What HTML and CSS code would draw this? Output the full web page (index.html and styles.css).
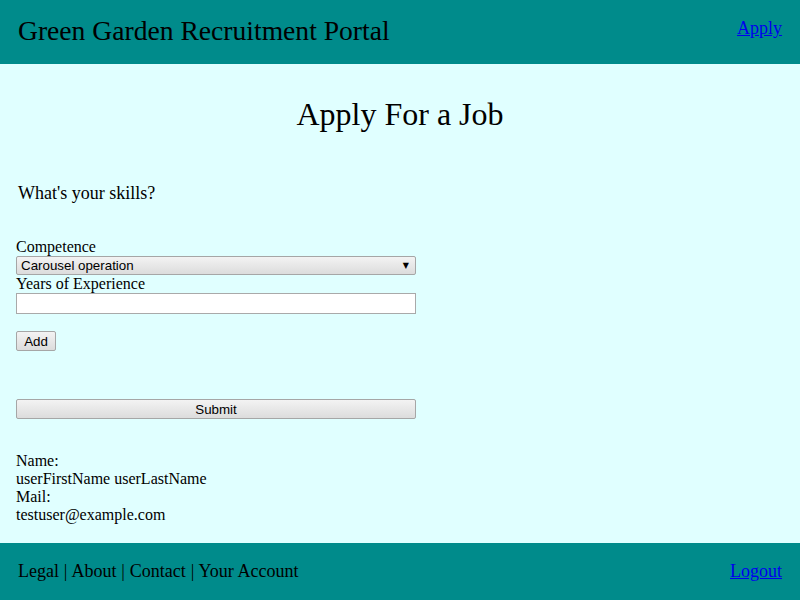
FILE: index.html
```html
<!DOCTYPE html>
<html lang="en">
<head>
<meta charset="utf-8">
<title>Green Garden Recruitment Portal</title>
<link rel="stylesheet" href="styles.css">
</head>
<body>
<header class="site-header">
  <div class="site-title">Green Garden Recruitment Portal</div>
  <a class="header-link" href="#">Apply</a>
</header>
<main class="content">
  <h1 class="page-title">Apply For a Job</h1>
  <h2 class="section-title">What's your skills?</h2>
  <form class="skill-form">
    <label class="field-label" for="competence">Competence</label>
    <div class="select-wrap">
      <select class="select" id="competence">
        <option>Carousel operation</option>
        <option>Ticket sales</option>
        <option>Lotteries</option>
      </select>
    </div>
    <label class="field-label" for="years">Years of Experience</label>
    <input class="text-input" id="years" type="text">
    <button class="btn btn-add" type="button">Add</button>
    <button class="btn btn-submit" type="button">Submit</button>
  </form>
  <div class="user-info">
    <div>Name:</div>
    <div>userFirstName userLastName</div>
    <div>Mail:</div>
    <div>testuser@example.com</div>
  </div>
</main>
<footer class="site-footer">
  <div class="footer-links">Legal | About | Contact | Your Account</div>
  <a class="footer-link" href="#">Logout</a>
</footer>
</body>
</html>
```
FILE: styles.css
```css
html, body {
  margin: 0;
  padding: 0;
}
body {
  background: #e0ffff;
  font-family: "Liberation Serif", "Times New Roman", serif;
  font-size: 16px;
  color: #000;
}
.site-header {
  display: flex;
  justify-content: space-between;
  align-items: flex-start;
  height: 64px;
  box-sizing: border-box;
  padding: 15px 18px 0;
  background: #008b8b;
}
.site-title {
  font-size: 27.6px;
}
.header-link,
.footer-link {
  font-size: 18px;
  color: #0000ee;
}
.header-link {
  margin-top: 3px;
}
.content {
  padding: 32px 16px 19px;
}
.page-title {
  margin: 0;
  font-size: 32px;
  font-weight: normal;
  text-align: center;
}
.section-title {
  margin: 50px 0 0;
  padding-left: 2px;
  font-size: 18px;
  font-weight: normal;
}
.skill-form {
  margin-top: 34px;
  width: 400px;
  display: flex;
  flex-direction: column;
  align-items: flex-start;
}
.field-label {
  display: block;
}
.select-wrap {
  position: relative;
  width: 400px;
}
.select-wrap::after {
  content: "\25BC";
  position: absolute;
  right: 7px;
  top: 3px;
  font-family: "DejaVu Sans", sans-serif;
  font-size: 8px;
  line-height: 13px;
  pointer-events: none;
}
.select {
  -webkit-appearance: none;
  appearance: none;
  display: block;
  width: 400px;
  height: 19px;
  margin: 0;
  padding: 0 0 0 4px;
  box-sizing: border-box;
  border: 1px solid #a6a6a6;
  border-radius: 2px;
  background: linear-gradient(#f3f3f3, #dcdcdc);
  font-family: "Liberation Sans", Arial, sans-serif;
  font-size: 13.33px;
  color: #000;
}
.text-input {
  display: block;
  width: 400px;
  height: 21px;
  margin: 0;
  box-sizing: border-box;
  border: 1px solid #a9a9a9;
  background: #fff;
  padding: 1px 2px;
  font-family: "Liberation Sans", Arial, sans-serif;
  font-size: 13.33px;
}
.btn {
  -webkit-appearance: none;
  appearance: none;
  height: 20px;
  box-sizing: border-box;
  border: 1px solid #a6a6a6;
  border-radius: 2px;
  background: linear-gradient(#f3f3f3, #dcdcdc);
  padding: 0 6px;
  font-family: "Liberation Sans", Arial, sans-serif;
  font-size: 13.33px;
  color: #000;
}
.btn-add {
  margin-top: 17px;
  width: 40px;
}
.btn-submit {
  margin-top: 48px;
  width: 400px;
}
.user-info {
  margin-top: 33px;
  line-height: 18px;
}
.site-footer {
  display: flex;
  justify-content: space-between;
  align-items: flex-start;
  padding: 18px 18px;
  background: #008b8b;
  font-size: 18px;
}
.footer-links {
  word-spacing: 0.4px;
}
```
